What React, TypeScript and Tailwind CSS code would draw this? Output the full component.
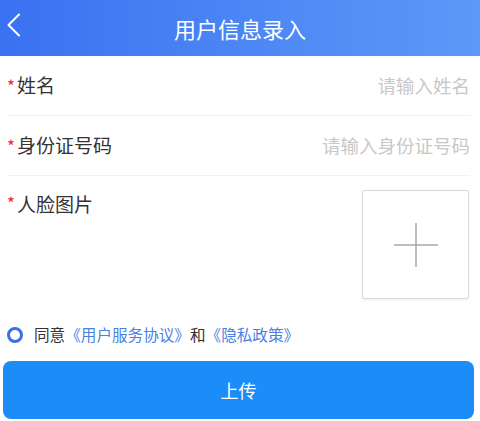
const font = { fontFamily: '"Noto Sans CJK SC", "Noto Sans", sans-serif' };

function Row({ label, placeholder }: { label: string; placeholder: string }) {
  return (
    <div className="flex h-[60px] items-center justify-between border-b border-[#f2f2f2]">
      <div className="flex items-center text-[19px] text-[#333]">
        <span className="mr-[2px] text-[17px] text-[#f0283c]">*</span>
        {label}
      </div>
      <input
        className="w-[280px] bg-transparent text-right text-[18.5px] text-[#333] outline-none placeholder:text-[#c8c8c8]"
        placeholder={placeholder}
      />
    </div>
  );
}

export default function App() {
  return (
    <div className="h-[421px] w-[480px] overflow-hidden bg-white" style={font}>
      <header className="relative flex h-[56px] items-center justify-center bg-gradient-to-r from-[#3a71f1] to-[#5d99f8]">
        <svg className="absolute left-[6px] top-[13px]" width="16" height="24" viewBox="0 0 16 24" fill="none">
          <path d="M13 1.5 L2.5 12 L13 22.5" stroke="white" strokeWidth="2" strokeLinecap="round" strokeLinejoin="round" />
        </svg>
        <h1 className="text-[22px] font-normal text-white">用户信息录入</h1>
      </header>

      <div className="pl-[7px] pr-[10px]">
        <Row label="姓名" placeholder="请输入姓名" />
        <Row label="身份证号码" placeholder="请输入身份证号码" />
        <div className="flex justify-between pt-[14px]">
          <div className="flex items-start text-[19px] text-[#333]">
            <span className="mr-[2px] text-[17px] text-[#f0283c]">*</span>
            人脸图片
          </div>
          <button className="mr-px flex h-[109px] w-[107px] items-center justify-center rounded-[2px] border border-[#d9d9d9] shadow-[0_1px_2px_rgba(0,0,0,0.08)]">
            <svg width="44" height="44" viewBox="0 0 44 44">
              <path d="M22 0 V44 M0 22 H44" stroke="#a8a8a8" strokeWidth="1.5" />
            </svg>
          </button>
        </div>
      </div>

      <div className="mt-[24px] flex items-center pl-[7px] text-[15.6px]">
        <span className="mr-[11px] h-[16px] w-[16px] rounded-full border-[3.5px] border-[#3a6fe8]" />
        <span className="text-[#333]">同意</span>
        <span className="text-[#4a7fe3]">《用户服务协议》</span>
        <span className="text-[#333]">和</span>
        <span className="text-[#4a7fe3]">《隐私政策》</span>
      </div>

      <div className="mt-[15px] px-[3px]">
        <button className="flex h-[58px] w-[471px] items-center justify-center rounded-[8px] bg-[#1b8cf8] text-[18px] text-white">
          上传
        </button>
      </div>
    </div>
  );
}
